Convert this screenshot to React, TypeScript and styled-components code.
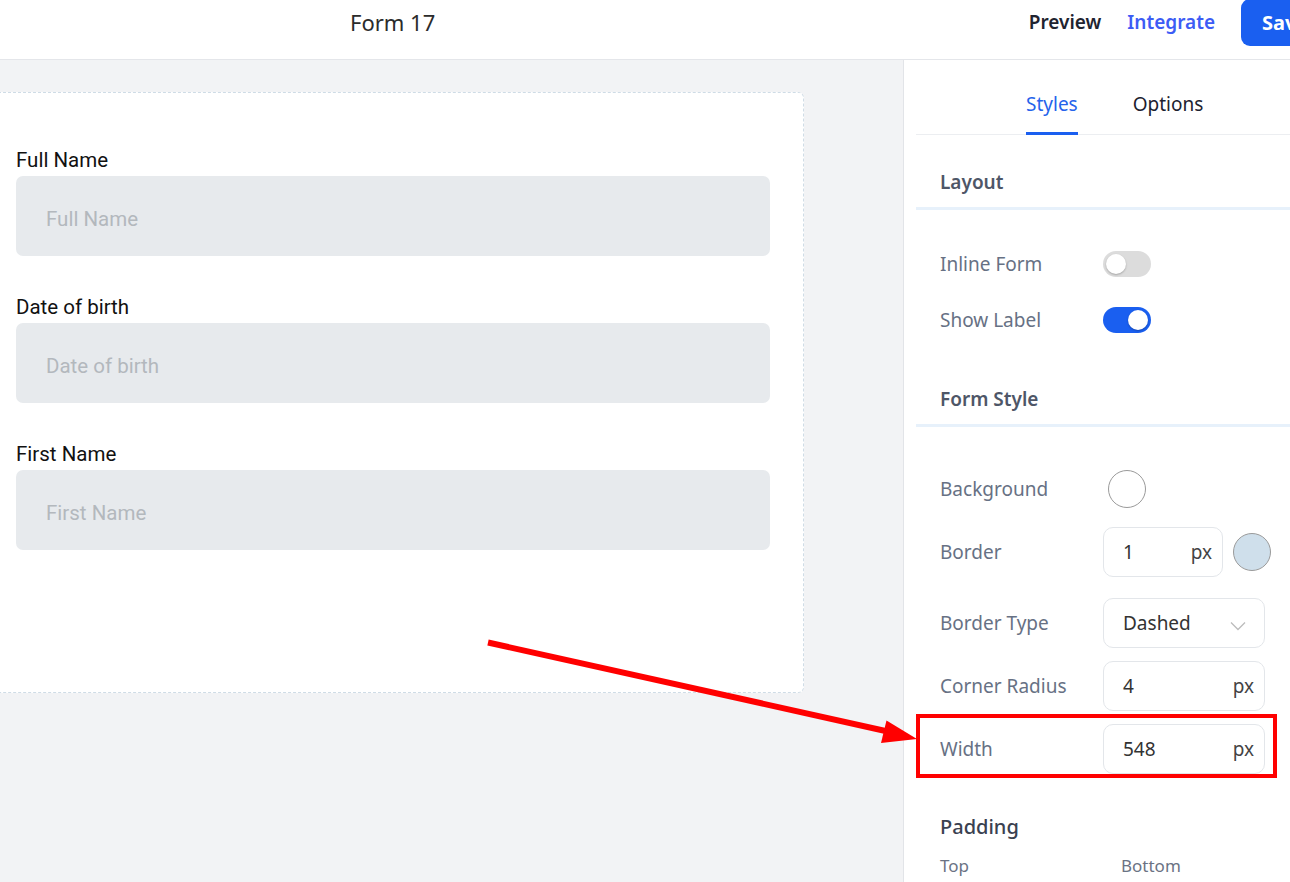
import React from "react";
import styled, { createGlobalStyle } from "styled-components";

const GlobalStyle = createGlobalStyle`
  html, body { margin: 0; padding: 0; background: #ffffff; overflow: hidden; }
  body { font-family: "Noto Sans", "Open Sans", sans-serif; }
  * { box-sizing: border-box; }
`;

const Page = styled.div`
  width: 1290px;
  height: 882px;
  display: flex;
  flex-direction: column;
  position: relative;
  overflow: hidden;
`;

const Header = styled.header`
  height: 60px;
  flex-shrink: 0;
  display: flex;
  align-items: center;
  border-bottom: 1px solid #e4e6ea;
  background: #fff;
`;

const Title = styled.div`
  flex: 1;
  padding-left: 350px;
  font-size: 22px;
  color: #2b2b2b;
  margin-top: -16px;
`;

const Nav = styled.nav`
  display: flex;
  align-items: flex-start;
  align-self: stretch;
  gap: 26px;
  margin-right: -31px;
`;

const NavLink = styled.a<{ $accent?: boolean }>`
  font-size: 19px;
  font-weight: 600;
  color: ${(p) => (p.$accent ? "#3d5cf5" : "#1f2430")};
  margin-top: 9px;
  text-decoration: none;
`;

const SaveButton = styled.button`
  width: 80px;
  height: 47px;
  margin-top: -1px;
  border: none;
  border-radius: 0 0 0 9px;
  border-top-left-radius: 9px;
  background: #1a5ff0;
  color: #fff;
  font-family: inherit;
  font-size: 20px;
  font-weight: 700;
  text-align: left;
  padding: 0 0 0 21px;
`;

const Body = styled.div`
  flex: 1;
  display: flex;
  min-height: 0;
`;

const Canvas = styled.main`
  flex: 1;
  background: #f2f3f5;
  padding-top: 32px;
  border-right: 1px solid #e2e4e8;
`;

const Card = styled.form`
  margin-left: -18px;
  width: 822px;
  height: 601px;
  background: #fff;
  border: 1px dashed #cfdce6;
  border-radius: 6px;
  padding: 55px 33px 0 33px;
  display: flex;
  flex-direction: column;
  gap: 39px;
  font-family: Roboto, "Liberation Sans", sans-serif;
`;

const Field = styled.div`
  display: flex;
  flex-direction: column;
  gap: 4px;
`;

const FieldLabel = styled.label`
  font-size: 20.5px;
  line-height: 24px;
  color: #111;
`;

const FieldInput = styled.input`
  height: 80px;
  border: none;
  border-radius: 7px;
  background: #e7eaed;
  padding: 6px 30px 0;
  font-family: inherit;
  font-size: 20.5px;
  color: #333;
  outline: none;
  &::placeholder { color: #b3b8bd; }
`;

const Sidebar = styled.aside`
  width: 386px;
  flex-shrink: 0;
  background: #fff;
  padding-left: 12px;
  display: block;
`;

const Tabs = styled.div`
  height: 75px;
  display: flex;
  align-items: flex-end;
  gap: 55px;
  padding-left: 110px;
  border-bottom: 1px solid #eceef1;
`;

const Tab = styled.div<{ $active?: boolean }>`
  font-size: 19px;
  line-height: 26px;
  padding-bottom: 15px;
  color: ${(p) => (p.$active ? "#2563eb" : "#1d2230")};
  border-bottom: 3px solid ${(p) => (p.$active ? "#1a5ff0" : "transparent")};
  margin-bottom: -1px;
`;

const SectionTitle = styled.h3`
  margin: 0;
  padding: 34px 24px 12px;
  font-size: 19px;
  line-height: 26px;
  font-weight: 600;
  color: #4e5667;
  border-bottom: 3px solid #e7f1fb;
`;

const ToggleList = styled.div`
  padding-top: 26px;
  padding-bottom: 4px;
`;

const Row = styled.div<{ $h?: number; $mb?: number; $highlight?: boolean }>`
  position: relative;
  display: flex;
  align-items: center;
  height: ${(p) => p.$h ?? 50}px;
  margin-bottom: ${(p) => p.$mb ?? 0}px;
  padding-left: 24px;
  ${(p) =>
    p.$highlight
      ? `&::after {
          content: "";
          position: absolute;
          left: 0;
          right: 13px;
          top: -10px;
          bottom: -4px;
          border: 4px solid #ff0000;
          pointer-events: none;
        }`
      : ""}
`;

const RowLabel = styled.span`
  width: 163px;
  flex-shrink: 0;
  font-size: 19px;
  color: #677184;
`;

const Toggle = styled.span<{ $on?: boolean }>`
  position: relative;
  width: 48px;
  height: 26px;
  border-radius: 13px;
  background: ${(p) => (p.$on ? "#1a5ff0" : "#dcdcdc")};
  &::after {
    content: "";
    position: absolute;
    top: 3px;
    left: ${(p) => (p.$on ? "25px" : "3px")};
    width: 20px;
    height: 20px;
    border-radius: 50%;
    background: #fff;
    box-shadow: 0 1px 2px rgba(0, 0, 0, 0.25);
  }
`;

const StyleList = styled.div`
  padding-top: 37px;
  display: flex;
  flex-direction: column;
  gap: 13px;
`;

const Swatch = styled.span<{ $color: string; $ml?: number }>`
  width: 38px;
  height: 38px;
  border-radius: 50%;
  border: 1px solid #9a9a9a;
  background: ${(p) => p.$color};
  margin-left: ${(p) => p.$ml ?? 0}px;
`;

const UnitBox = styled.div<{ $w: number }>`
  width: ${(p) => p.$w}px;
  height: 50px;
  border: 1px solid #e3e6ea;
  border-radius: 10px;
  display: flex;
  align-items: center;
  justify-content: space-between;
  padding: 0 10px 0 19px;
  font-size: 19px;
  color: #333;
  background: #fff;
`;

const Unit = styled.span`
  color: #444;
`;

const Chevron = styled.svg`
  width: 16px;
  height: 10px;
  margin-right: 8px;
  margin-top: 6px;
`;

const PaddingBlock = styled.div`
  padding: 40px 24px 0;
`;

const PaddingTitle = styled.div`
  font-size: 20px;
  line-height: 26px;
  font-weight: 500;
  color: #3a4150;
`;

const PaddingCols = styled.div`
  display: grid;
  grid-template-columns: 181px 1fr;
  margin-top: 14px;
  font-size: 17px;
  line-height: 23px;
  color: #6b7384;
`;

const Annotation = styled.svg`
  position: absolute;
  left: 0;
  top: 0;
  width: 1290px;
  height: 882px;
  pointer-events: none;
`;

const fields = ["Full Name", "Date of birth", "First Name"];

export default function App() {
  return (
    <>
      <GlobalStyle />
      <Page>
        <Header>
          <Title>Form 17</Title>
          <Nav>
            <NavLink>Preview</NavLink>
            <NavLink $accent>Integrate</NavLink>
            <SaveButton>Save</SaveButton>
          </Nav>
        </Header>
        <Body>
          <Canvas>
            <Card>
              {fields.map((f) => (
                <Field key={f}>
                  <FieldLabel>{f}</FieldLabel>
                  <FieldInput placeholder={f} readOnly />
                </Field>
              ))}
            </Card>
          </Canvas>
          <Sidebar>
            <Tabs>
              <Tab $active>Styles</Tab>
              <Tab>Options</Tab>
            </Tabs>
            <SectionTitle>Layout</SectionTitle>
            <ToggleList>
              <Row $h={56}>
                <RowLabel>Inline Form</RowLabel>
                <Toggle />
              </Row>
              <Row $h={56}>
                <RowLabel>Show Label</RowLabel>
                <Toggle $on />
              </Row>
            </ToggleList>
            <SectionTitle>Form Style</SectionTitle>
            <StyleList>
              <Row>
                <RowLabel>Background</RowLabel>
                <Swatch $color="#ffffff" $ml={5} />
              </Row>
              <Row $mb={8}>
                <RowLabel>Border</RowLabel>
                <UnitBox $w={120}>
                  <span>1</span>
                  <Unit>px</Unit>
                </UnitBox>
                <Swatch $color="#cfdfeb" $ml={10} />
              </Row>
              <Row>
                <RowLabel>Border Type</RowLabel>
                <UnitBox $w={162}>
                  <span>Dashed</span>
                  <Chevron viewBox="0 0 16 10">
                    <path d="M1 1.5 L8 8.5 L15 1.5" fill="none" stroke="#bcbcbc" strokeWidth="1.3" />
                  </Chevron>
                </UnitBox>
              </Row>
              <Row>
                <RowLabel>Corner Radius</RowLabel>
                <UnitBox $w={162}>
                  <span>4</span>
                  <Unit>px</Unit>
                </UnitBox>
              </Row>
              <Row $highlight>
                <RowLabel>Width</RowLabel>
                <UnitBox $w={162}>
                  <span>548</span>
                  <Unit>px</Unit>
                </UnitBox>
              </Row>
            </StyleList>
            <PaddingBlock>
              <PaddingTitle>Padding</PaddingTitle>
              <PaddingCols>
                <span>Top</span>
                <span>Bottom</span>
              </PaddingCols>
            </PaddingBlock>
          </Sidebar>
        </Body>
        <Annotation viewBox="0 0 1290 882">
          <line x1="488" y1="642.5" x2="890" y2="732" stroke="#ff0000" strokeWidth="6" />
          <polygon points="917,739 886.5,720.5 881,743" fill="#ff0000" />
        </Annotation>
      </Page>
    </>
  );
}
